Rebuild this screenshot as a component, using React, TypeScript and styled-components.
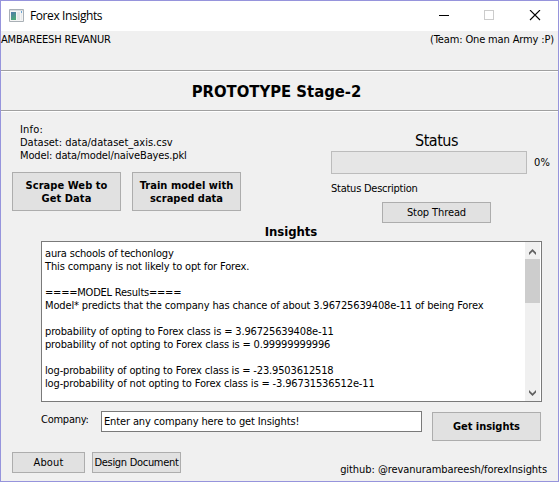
import React from "react";
import styled, { createGlobalStyle } from "styled-components";

const GlobalStyle = createGlobalStyle`
  * { box-sizing: border-box; }
  html, body { margin: 0; padding: 0; overflow: hidden; }
`;

const Window = styled.div`
  width: 559px;
  height: 482px;
  display: flex;
  flex-direction: column;
  border: 1px solid #9694dc;
  background: #f0f0f0;
  color: #000;
  font-family: "DejaVu Sans Condensed", "DejaVu Sans", sans-serif;
  font-stretch: condensed;
  font-size: 11px;
  line-height: 13px;
  white-space: nowrap;
`;

const TitleBar = styled.header`
  height: 30px;
  flex: none;
  display: flex;
  align-items: center;
  background: #fff;
`;

const AppIcon = styled.svg`
  margin: 0 0 2px 8px;
`;

const Title = styled.span`
  flex: 1;
  margin-left: 6px;
  font: 12px/16px "Open Sans", sans-serif;
  letter-spacing: -0.4px;
`;

const Controls = styled.svg`
  margin-right: 16px;
`;

const Text = styled.span<{ $track?: number }>`
  letter-spacing: ${(p) => p.$track ?? -0.15}px;
`;

const Credits = styled.div`
  height: 39px;
  flex: none;
  display: flex;
  justify-content: space-between;
  padding: 2px 4px 0 0;
`;

const Separator = styled.div`
  height: 2px;
  flex: none;
  border-top: 1px solid #a0a0a0;
  border-bottom: 1px solid #fff;
`;

const Banner = styled.h1`
  height: 38px;
  flex: none;
  margin: 0;
  padding-right: 6px;
  display: flex;
  align-items: center;
  justify-content: center;
  font-size: 16.5px;
  font-weight: bold;
  letter-spacing: 0;
`;

const Overview = styled.section`
  height: 112px;
  flex: none;
  display: grid;
  grid-template-columns: 319px 1fr;
  padding-left: 11px;
`;

const DataPane = styled.div`
  padding-top: 11px;
`;

const InfoLines = styled.div`
  display: flex;
  flex-direction: column;
  padding-left: 8px;
  height: 49px;
`;

const ButtonRow = styled.div`
  display: flex;
  gap: 11px;
`;

const Button = styled.button<{ $w: number; $h: number; $strong?: boolean; $track?: number }>`
  width: ${(p) => p.$w}px;
  height: ${(p) => p.$h}px;
  flex: none;
  padding: 0;
  border: 1px solid #adadad;
  border-radius: 0;
  background: #e1e1e1;
  color: #000;
  font-family: inherit;
  font-stretch: inherit;
  font-size: 11px;
  line-height: 13px;
  font-weight: ${(p) => (p.$strong ? "bold" : "normal")};
  letter-spacing: ${(p) => p.$track ?? -0.1}px;
  white-space: pre;
`;

const StatusPane = styled.div`
  display: flex;
  flex-direction: column;
  padding-top: 19px;
`;

const StatusTitle = styled.h2`
  width: 211px;
  margin: 0;
  text-align: center;
  font-size: 16px;
  line-height: 20px;
  font-weight: normal;
  letter-spacing: -0.5px;
`;

const ProgressRow = styled.div`
  display: flex;
  align-items: center;
  gap: 7px;
  height: 23px;
  margin-bottom: 8px;
`;

const Progress = styled.div`
  width: 196px;
  height: 23px;
  border: 1px solid #bcbcbc;
  background: #e6e6e6;
`;

const StopRow = styled.div`
  padding: 7px 0 0 51px;
`;

const InsightsTitle = styled.h2`
  height: 17px;
  flex: none;
  width: 580px;
  margin: 0;
  text-align: center;
  font-size: 13px;
  line-height: 15px;
  font-weight: bold;
  letter-spacing: -0.05px;
`;

const Results = styled.div`
  width: 501px;
  height: 161px;
  flex: none;
  margin-left: 40px;
  display: flex;
  border: 1px solid #7a7a7a;
  background: #fff;
`;

const Lines = styled.div`
  flex: 1;
  display: flex;
  flex-direction: column;
  padding: 5px 0 0 3px;
`;

const Line = styled(Text)`
  height: 13px;
`;

const ScrollBar = styled.div`
  width: 15px;
  margin-right: 1px;
  display: flex;
  flex-direction: column;
  background: #f0f0f0;
`;

const Thumb = styled.div`
  height: 44px;
  background: #cdcdcd;
`;

const Track = styled.div`
  flex: 1;
`;

const Query = styled.section`
  display: flex;
  height: 50px;
  flex: none;
  align-items: flex-start;
  padding: 9px 0 0 40px;
`;

const Label = styled.label`
  width: 60px;
  padding-top: 2px;
  letter-spacing: -0.25px;
`;

const Field = styled.input`
  width: 321px;
  height: 21px;
  padding: 0 2px;
  border: 1px solid #7a7a7a;
  border-radius: 0;
  background: #fff;
  color: #000;
  font-family: inherit;
  font-stretch: inherit;
  font-size: 11px;
  letter-spacing: -0.13px;
`;

const Submit = styled.div`
  padding: 1px 0 0 10px;
`;

const Footer = styled.footer`
  display: flex;
  gap: 7px;
  padding: 0 11px;
`;

const Link = styled.span`
  margin-left: auto;
  padding-top: 11px;
  letter-spacing: -0.06px;
`;

const results: [string, number][] = [
  ["aura schools of techonlogy", -0.18],
  ["This company is not likely to opt for Forex.", -0.14],
  ["", 0],
  ["====MODEL Results====", -0.22],
  ["Model* predicts that the company has chance of about 3.96725639408e-11 of being Forex", -0.14],
  ["", 0],
  ["probability of opting to Forex class is = 3.96725639408e-11", -0.15],
  ["probability of not opting to Forex class is = 0.99999999996", -0.16],
  ["", 0],
  ["log-probability of opting to Forex class is = -23.9503612518", -0.15],
  ["log-probability of not opting to Forex class is = -3.96731536512e-11", -0.14],
];

function Arrow({ down = false }: { down?: boolean }) {
  return (
    <svg width="15" height="17" viewBox="0 0 15 17">
      <path
        d={down ? "M4 6 7.5 9.5 11 6V8.5L7.5 12 4 8.5Z" : "M4 11 7.5 7.5 11 11V8.5L7.5 5 4 8.5Z"}
        transform={down ? undefined : "translate(0 2)"}
        fill="#606060"
      />
    </svg>
  );
}

export default function App() {
  return (
    <>
      <GlobalStyle />
      <Window>
        <TitleBar>
          <AppIcon width="15" height="13" viewBox="0 0 15 13">
            <defs>
              <linearGradient id="pane" x2="0.4" y2="1">
                <stop stopColor="#4f78ac" />
                <stop offset="1" stopColor="#4ba779" />
              </linearGradient>
            </defs>
            <path d="M.5.5h14v12H.5z" fill="#f5f5f5" stroke="#a9b0b6" />
            <path d="M1 1h13v1H1z" fill="#d7dce0" />
            <path d="M2 3h5v8H2z" fill="url(#pane)" />
            <path d="M8 3h3v8H8z" fill="#e3e6e8" />
            <path d="M12 3h1v8h-1z" fill="#e6eaed" />
            <path d="M12 2h1v2h-1z" fill="#6ba4d2" />
          </AppIcon>
          <Title>Forex Insights</Title>
          <Controls width="104" height="12" viewBox="0 0 104 12" shapeRendering="crispEdges">
            <path d="M1 5.5h10" stroke="#000" />
            <path d="M46.5.5h9v9h-9z" fill="none" stroke="#ccc" />
            <path d="m92 0 10 10m0-10L92 10" stroke="#000" strokeWidth="1.1" shapeRendering="auto" />
          </Controls>
        </TitleBar>
        <Credits>
          <Text $track={-0.17}>AMBAREESH REVANUR</Text>
          <Text $track={-0.14}>(Team: One man Army :P)</Text>
        </Credits>
        <Separator />
        <Banner>PROTOTYPE Stage-2</Banner>
        <Separator />
        <Overview>
          <DataPane>
            <InfoLines>
              <Text $track={0.2}>Info:</Text>
              <Text $track={0}>Dataset: data/dataset_axis.csv</Text>
              <Text $track={-0.13}>Model: data/model/naiveBayes.pkl</Text>
            </InfoLines>
            <ButtonRow>
              <Button $w={109} $h={39} $strong $track={0.06}>{"Scrape Web to\nGet Data"}</Button>
              <Button $w={109} $h={39} $strong $track={0.03}>{"Train model with\nscraped data"}</Button>
            </ButtonRow>
          </DataPane>
          <StatusPane>
            <StatusTitle>Status</StatusTitle>
            <ProgressRow>
              <Progress />
              <Text $track={0.2}>0%</Text>
            </ProgressRow>
            <Text $track={-0.25}>Status Description</Text>
            <StopRow>
              <Button $w={109} $h={21}>Stop Thread</Button>
            </StopRow>
          </StatusPane>
        </Overview>
        <InsightsTitle>Insights</InsightsTitle>
        <Results>
          <Lines>
            {results.map(([line, track], i) => (
              <Line key={i} $track={track}>{line}</Line>
            ))}
          </Lines>
          <ScrollBar>
            <Arrow />
            <Thumb />
            <Track />
            <Arrow down />
          </ScrollBar>
        </Results>
        <Query>
          <Label htmlFor="company">Company:</Label>
          <Field id="company" defaultValue="Enter any company here to get Insights!" />
          <Submit>
            <Button $w={109} $h={29} $strong $track={-0.05}>Get insights</Button>
          </Submit>
        </Query>
        <Footer>
          <Button $w={73} $h={21} $track={0.1}>About</Button>
          <Button $w={89} $h={21} $track={-0.3}>Design Document</Button>
          <Link>github: @revanurambareesh/forexInsights</Link>
        </Footer>
      </Window>
    </>
  );
}
